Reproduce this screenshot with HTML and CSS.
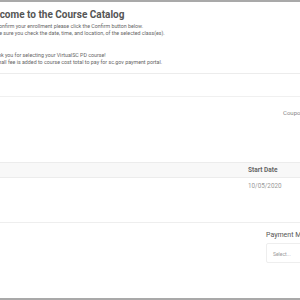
FILE: index.html
```html
<!DOCTYPE html>
<html lang="en">
<head>
  <meta charset="UTF-8" />
  <title>Course Catalog - Checkout</title>
  <link rel="stylesheet" href="styles.css">
</head>
<body>
  <div class="page">
    <div class="welcome">
      <h1>Welcome to the Course Catalog</h1>
      <p>To confirm your enrollment please click the Confirm button below.</p>
      <p>Make sure you check the date, time, and location, of the selected class(es).</p>
      <p class="spaced">Thank you for selecting your VirtualSC PD course!</p>
      <p>A small fee is added to course cost total to pay for sc.gov payment portal.</p>
    </div>

    <div class="coupon-section">
      <div class="coupon">
        <label>Coupon Code</label>
      </div>
    </div>

    <div class="course-table">
      <div class="table-head">
        <div class="col-name"></div>
        <div class="col-date">Start Date</div>
      </div>
      <div class="table-row">
        <div class="col-name"></div>
        <div class="col-date">10/05/2020</div>
      </div>
    </div>

    <div class="payment-section">
      <div class="payment">
        <label>Payment Method</label>
        <div class="select">Select...</div>
      </div>
    </div>
  </div>
</body>
</html>
```

FILE: styles.css
```css
* {
  box-sizing: border-box;
  margin: 0;
  padding: 0;
}

body {
  font-family: Roboto, "Liberation Sans", sans-serif;
  background-color: white;
  width: 300px;
  height: 300px;
  overflow: hidden;
  border-top: 2px solid #a9a9a9;
  border-bottom: 2px solid #a9a9a9;
}

.page {
  height: 296px;
  overflow: hidden;
}

.welcome {
  height: 72px;
  padding-top: 7px;
  border-bottom: 1px solid #ececec;
  color: #666;
}

.welcome h1 {
  margin-left: -17px;
  font-size: 10px;
  font-weight: bold;
  color: #555;
  line-height: 12px;
  margin-bottom: 1.5px;
  white-space: nowrap;
}

.welcome p {
  margin-left: -11px;
  font-size: 5.3px;
  line-height: 7px;
  white-space: nowrap;
}

.welcome p.spaced {
  margin-top: 15px;
}

.coupon-section {
  margin-top: 22px;
  height: 66px;
  border-top: 1px solid #f0f0f0;
  padding-top: 12px;
  padding-left: 283px;
}

.coupon {
  font-size: 6px;
  line-height: 7px;
  color: #888;
  white-space: nowrap;
}

.course-table {
  height: 61px;
  border-bottom: 1px solid #eee;
}

.table-head,
.table-row {
  display: flex;
  white-space: nowrap;
}

.table-head {
  height: 16px;
  align-items: center;
  background-color: #f8f8f8;
  border-top: 1px solid #ececec;
  border-bottom: 1px solid #ececec;
  font-size: 6.5px;
  font-weight: bold;
  color: #666;
}

.table-row {
  padding-top: 4px;
  font-size: 6.3px;
  color: #999;
}

.col-name {
  width: 248px;
}

.payment-section {
  padding-top: 8px;
  padding-left: 266px;
}

.payment label {
  display: block;
  font-size: 7px;
  color: #555;
  white-space: nowrap;
  margin-bottom: 4px;
}

.select {
  width: 60px;
  height: 20px;
  border: 1px solid #eee;
  border-radius: 2px;
  padding: 7px 0 0 6px;
  font-size: 5px;
  color: #999;
}
```
